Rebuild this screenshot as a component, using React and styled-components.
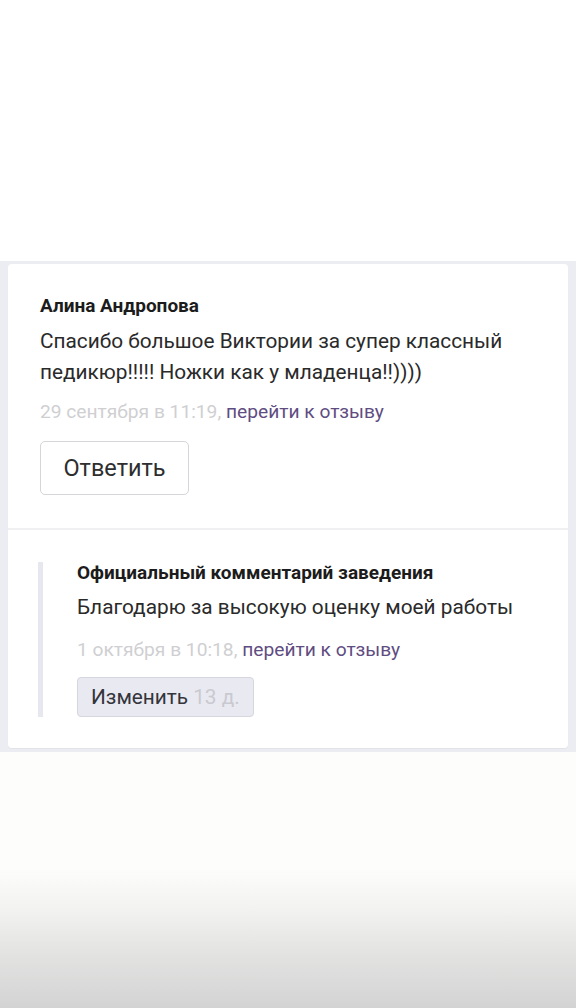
import React from "react";
import styled, { createGlobalStyle } from "styled-components";

const Global = createGlobalStyle`
  html, body { margin: 0; padding: 0; }
  body {
    font-family: Roboto, "Noto Sans", Arial, sans-serif;
    background: #fdfdfb;
    -webkit-font-smoothing: antialiased;
  }
`;

const Page = styled.div`
  min-height: 1008px;
  display: flex;
  flex-direction: column;
  background: linear-gradient(
    to bottom,
    #ffffff 0px,
    #ffffff 261px,
    #fdfdfb 752px,
    #fdfdfb 868px,
    #f2f2f1 910px,
    #e4e4e3 950px,
    #d3d3d3 1008px
  );
`;

const TopSpace = styled.div`
  height: 261px;
  background: #ffffff;
`;

const Band = styled.div`
  background: #ececf3;
  padding: 3px 8px 4px 8px;
`;

const Card = styled.div`
  background: #ffffff;
  border-radius: 4px;
  box-shadow: 0 1px 1px rgba(0, 0, 0, 0.04);
`;

const Section = styled.div`
  padding: ${(p) => p.$pad};
  border-top: ${(p) => (p.$divided ? "2px solid #f0f0f2" : "none")};
`;

const Reply = styled.div`
  border-left: 5px solid #e7e7ef;
  padding-left: 34px;
  margin-left: 30px;
`;

const Author = styled.div`
  font-weight: 700;
  font-size: 19px;
  line-height: 22px;
  color: #1c1c1c;
  letter-spacing: 0;
`;

const Text = styled.div`
  font-size: 20.8px;
  line-height: 31px;
  color: #2a2a2a;
  margin-top: ${(p) => p.$mt};
`;

const Meta = styled.div`
  font-size: 19.2px;
  line-height: 26px;
  margin-top: ${(p) => p.$mt};
  color: #cfcfd2;
`;

const Link = styled.a`
  color: #5f4d82;
  text-decoration: none;
`;

const OutlineButton = styled.button`
  margin-top: 16px;
  height: 54px;
  width: 149px;
  padding: 0;
  border: 1px solid #d6d6da;
  border-radius: 5px;
  background: #ffffff;
  font-family: Roboto, "Noto Sans", Arial, sans-serif;
  font-size: 23.5px;
  color: #2e2e2e;
  display: block;
`;

const SoftButton = styled.button`
  margin-top: 14px;
  height: 40px;
  padding: 0 13px;
  border: 1px solid #d6d6e0;
  border-radius: 4px;
  background: #e9e9f1;
  font-family: Roboto, "Noto Sans", Arial, sans-serif;
  font-size: 20.8px;
  color: #34343c;
  display: block;
`;

const Muted = styled.span`
  color: #c9c9d0;
  margin-left: 5px;
`;

export default function App() {
  return (
    <>
      <Global />
      <Page>
        <TopSpace />
        <Band>
          <Card>
            <Section $pad="31px 32px 33px 32px">
              <Author>Алина Андропова</Author>
              <Text $mt="8.5px">
                Спасибо большое Виктории за супер классный
                <br />
                педикюр!!!!! Ножки как у младенца!!))))
              </Text>
              <Meta $mt="11.5px">
                29 сентября в 11:19, <Link href="#">перейти к отзыву</Link>
              </Meta>
              <OutlineButton>Ответить</OutlineButton>
            </Section>
            <Section $divided $pad="32px 0 31px 0">
              <Reply>
                <Author>Официальный комментарий заведения</Author>
                <Text $mt="7.5px">Благодарю за высокую оценку моей работы</Text>
                <Meta $mt="14.5px">
                  1 октября в 10:18, <Link href="#">перейти к отзыву</Link>
                </Meta>
                <SoftButton>
                  Изменить<Muted>13 д.</Muted>
                </SoftButton>
              </Reply>
            </Section>
          </Card>
        </Band>
      </Page>
    </>
  );
}
